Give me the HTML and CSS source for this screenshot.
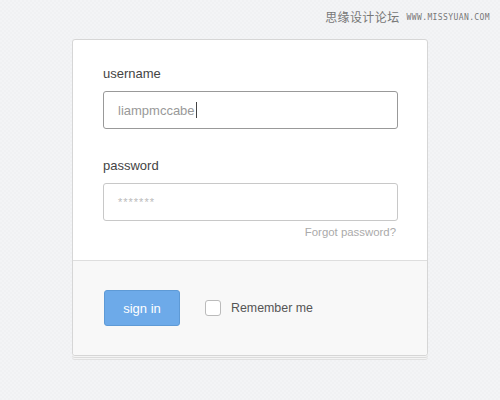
FILE: index.html
```html
<!DOCTYPE html>
<html lang="en">
<head>
  <meta charset="UTF-8" />
  <title>Login</title>
  <link rel="stylesheet" href="styles.css">
</head>
<body>

  <div class="marca">
    <span class="marca-cn">思缘设计论坛</span>
    <span class="marca-url">WWW.MISSYUAN.COM</span>
  </div>

  <form class="login">
    <div class="campos">
      <label class="etiqueta" for="usuario">username</label>
      <div class="entrada activa" id="usuario">liampmccabe<span class="cursor"></span></div>

      <label class="etiqueta etiqueta-pass" for="clave">password</label>
      <div class="entrada pass" id="clave">*******</div>

      <div class="olvido">Forgot password?</div>
    </div>

    <div class="pie">
      <button type="button" class="btn-entrar">sign in</button>
      <label class="recordar">
        <span class="caja"></span>
        Remember me
      </label>
    </div>
  </form>

</body>
</html>
```

FILE: styles.css
```css
body {
  margin: 0;
  height: 400px;
  font-family: Arial, 'Liberation Sans', sans-serif;
  color: #444;
  background-color: #f3f4f6;
  background-image:
    linear-gradient(45deg, rgba(0,0,0,0.01) 25%, transparent 25%, transparent 75%, rgba(0,0,0,0.01) 75%),
    linear-gradient(45deg, rgba(0,0,0,0.01) 25%, transparent 25%, transparent 75%, rgba(0,0,0,0.01) 75%);
  background-size: 4px 4px;
  background-position: 0 0, 2px 2px;
  overflow: hidden;
}

.marca {
  display: flex;
  justify-content: flex-end;
  align-items: center;
  gap: 7px;
  height: 14px;
  padding: 9px 10px 0 0;
  color: #777;
}

.marca-cn {
  font-family: 'Noto Sans CJK SC', sans-serif;
  font-size: 12px;
  letter-spacing: 0.4px;
}

.marca-url {
  font-family: 'DejaVu Sans Mono', monospace;
  font-size: 8px;
  letter-spacing: 0.4px;
  padding-top: 2px;
}

.login {
  width: 354px;
  margin: 16px 0 0 72px;
  background-color: #fff;
  border: 1px solid #d6d6d6;
  border-radius: 3px;
  box-shadow: 0 1px 0 #f4f4f4, 0 2px 0 #dcdcdc, 0 3px 0 #f4f4f4, 0 4px 0 #e0e0e0;
}

.campos {
  padding: 26px 29px 22px 30px;
  border-bottom: 1px solid #dedede;
}

.etiqueta {
  display: block;
  font-size: 13px;
  line-height: 16px;
  color: #444;
  margin-bottom: 9px;
}

.etiqueta-pass {
  margin-top: 29px;
}

.entrada {
  display: flex;
  align-items: center;
  height: 36px;
  padding: 0 14px;
  border: 1px solid #c8c8c8;
  border-radius: 3px;
  font-size: 13px;
  color: #aaa;
}

.entrada.activa {
  border-color: #999;
  color: #999;
}

.cursor {
  display: inline-block;
  width: 1px;
  height: 16px;
  margin-left: 1px;
  background-color: #444;
}

.entrada.pass {
  font-size: 11px;
  letter-spacing: 1px;
  color: #bbb;
}

.olvido {
  margin-top: 5px;
  text-align: right;
  font-size: 11.4px;
  color: #aaa;
  padding-right: 2px;
}

.pie {
  display: flex;
  align-items: center;
  padding: 29px 30px 29px 31px;
  background-color: #f8f8f8;
  border-radius: 0 0 3px 3px;
}

.btn-entrar {
  width: 76px;
  height: 36px;
  background-color: #6daae9;
  border: 1px solid #5e9ad6;
  border-radius: 3px;
  color: #fff;
  font-family: Arial, 'Liberation Sans', sans-serif;
  font-size: 13px;
  cursor: pointer;
}

.recordar {
  display: flex;
  align-items: center;
  gap: 10px;
  margin-left: 25px;
  font-size: 12.4px;
  color: #555;
}

.caja {
  width: 14px;
  height: 14px;
  background-color: #fff;
  border: 1px solid #bbb;
  border-radius: 3px;
}
```
